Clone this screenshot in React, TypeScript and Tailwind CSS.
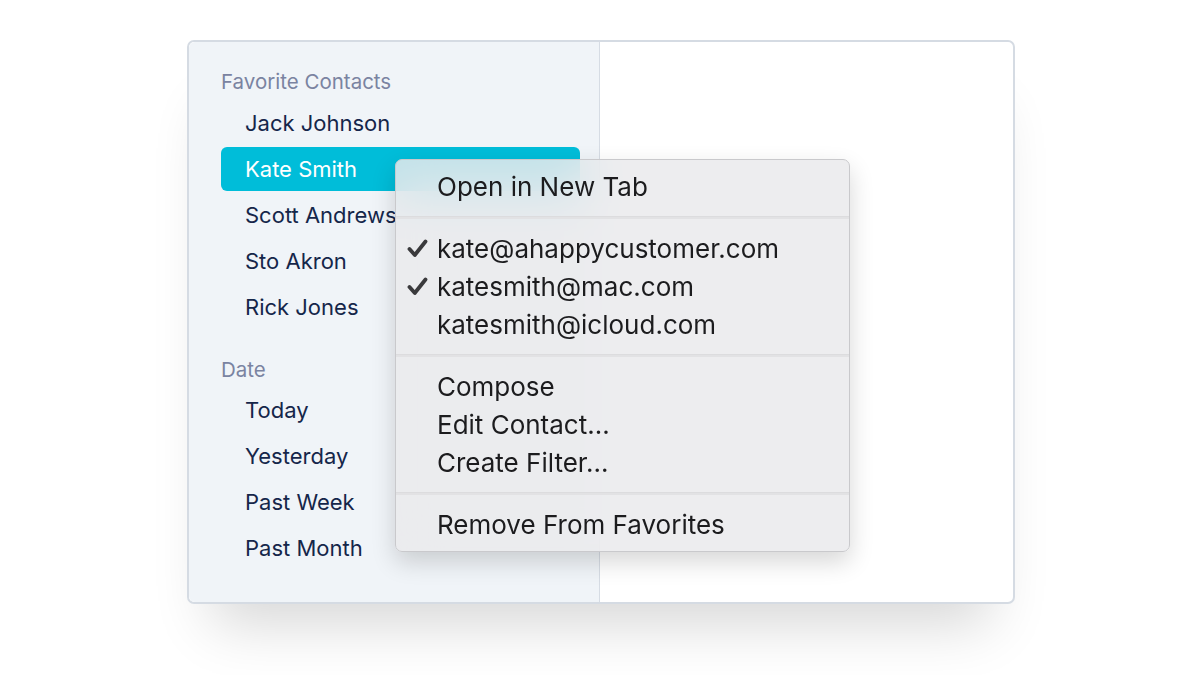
import type { ReactNode } from 'react'

const favorites = ['Jack Johnson', 'Kate Smith', 'Scott Andrews', 'Sto Akron', 'Rick Jones']
const dates = ['Today', 'Yesterday', 'Past Week', 'Past Month']

function SectionLabel({ children }: { children: ReactNode }) {
  return <div className="h-[28px] flex items-center text-[20.5px] text-[#7a83a1]">{children}</div>
}

function SidebarItem({ label, active }: { label: string; active?: boolean }) {
  return (
    <div className="h-[46px] flex items-center">
      <div
        className={
          active
            ? 'w-full h-[44px] flex items-center pl-6 rounded-[6px] bg-[#00bdd9] text-white text-[22px]'
            : 'w-full h-[44px] flex items-center pl-6 text-[#15264a] text-[22px]'
        }
      >
        {label}
      </div>
    </div>
  )
}

function Check() {
  return (
    <svg width="21" height="19" viewBox="0 0 21 19" className="absolute left-[11px]">
      <path d="M2.5 10 L7.8 16 L18.5 2.5" fill="none" stroke="#3a3a3c" strokeWidth="3.8" strokeLinecap="round" strokeLinejoin="round" />
    </svg>
  )
}

function MenuItem({ label, checked }: { label: string; checked?: boolean }) {
  return (
    <div className="relative h-[38px] flex items-center pl-[41px] text-[26px] text-[#1c1c1e]">
      {checked && <Check />}
      {label}
    </div>
  )
}

function Separator() {
  return (
    <div className="h-[24px] flex items-center">
      <div className="w-full h-[3px] bg-[#e2e2e4] border-t border-[#dcdcde]" />
    </div>
  )
}

export default function App() {
  return (
    <div className="w-[1200px] h-[675px] bg-white pt-[40px] pl-[187px]" style={{ fontFamily: 'Inter, "Noto Sans", sans-serif' }}>
      <div className="relative w-[828px] h-[564px] flex rounded-[7px] border-2 border-[#d5dbe3] bg-white shadow-[0_45px_55px_-25px_rgba(0,0,0,0.16)]">
        {/* sidebar */}
        <div className="w-[411px] h-full bg-[#f0f4f8] border-r border-[#d6dce4] rounded-l-[6px] pt-[26px] pl-[32px] pr-[19px]">
          <SectionLabel>Favorite Contacts</SectionLabel>
          <div className="mt-[4px] flex flex-col">
            {favorites.map((f) => (
              <SidebarItem key={f} label={f} active={f === 'Kate Smith'} />
            ))}
          </div>
          <div className="mt-[26px]">
            <SectionLabel>Date</SectionLabel>
          </div>
          <div className="mt-[3px] flex flex-col">
            {dates.map((d) => (
              <SidebarItem key={d} label={d} />
            ))}
          </div>
        </div>
        <div className="flex-1" />

        {/* context menu */}
        <div className="absolute left-[206px] top-[117px] w-[455px] rounded-[7px] border border-[#c9c9cc] bg-[rgba(233,233,236,0.84)] backdrop-blur-xl shadow-[0_10px_24px_rgba(0,0,0,0.16)] pt-[7px] pb-[8px]">
          <MenuItem label="Open in New Tab" />
          <Separator />
          <MenuItem label="kate@ahappycustomer.com" checked />
          <MenuItem label="katesmith@mac.com" checked />
          <MenuItem label="katesmith@icloud.com" />
          <Separator />
          <MenuItem label="Compose" />
          <MenuItem label="Edit Contact..." />
          <MenuItem label="Create Filter..." />
          <Separator />
          <MenuItem label="Remove From Favorites" />
        </div>
      </div>
    </div>
  )
}
